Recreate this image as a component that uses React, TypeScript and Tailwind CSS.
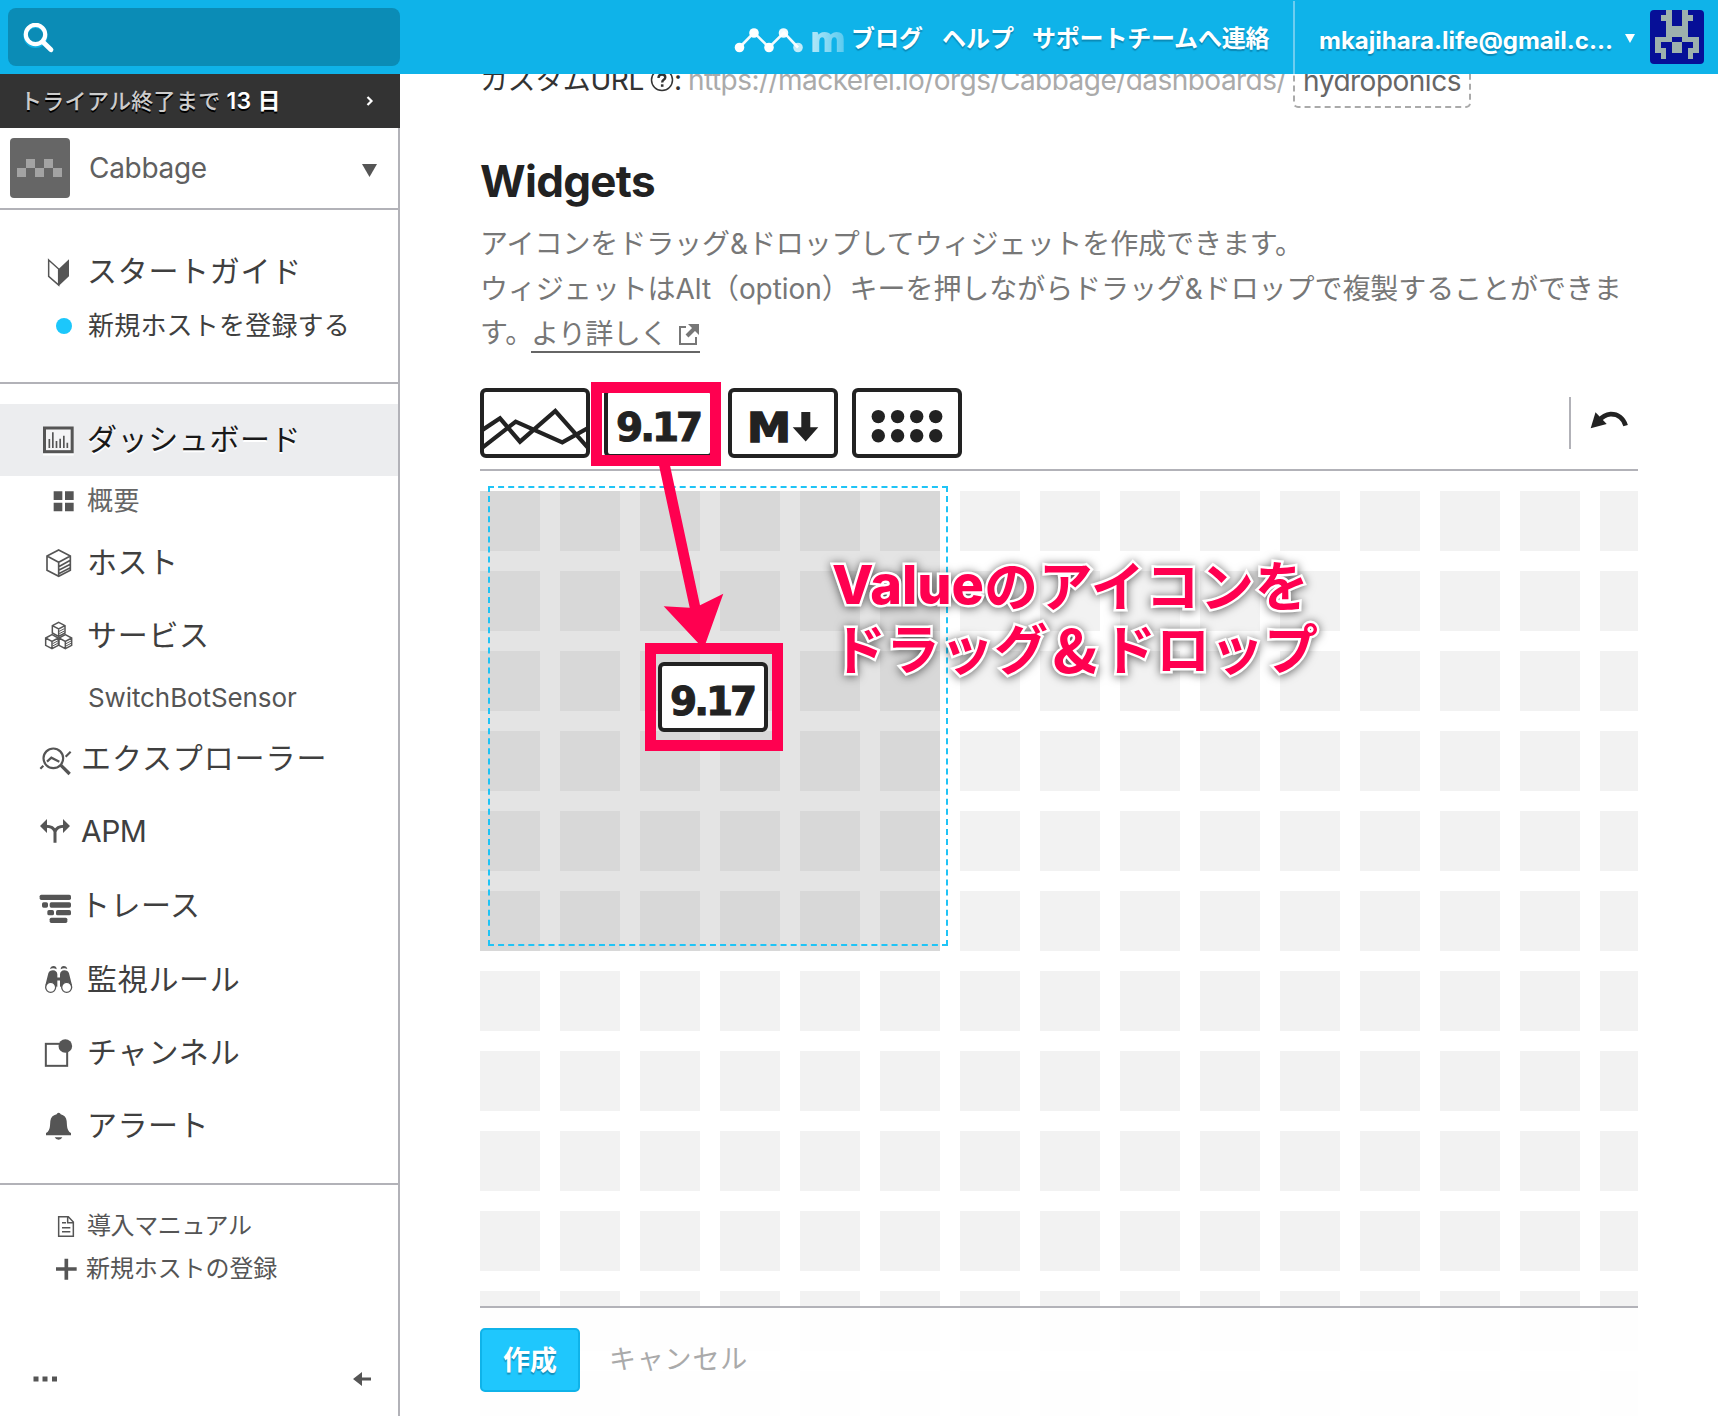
import type { ReactNode } from "react";

const INK = "#555555";

/* Sidebar glyphs share a 36px slot drawn on a 108-unit canvas. */
function NavIcon({ top, children }: { top: number; children: ReactNode }) {
  return (
    <svg className="ml-[39px] size-9 shrink-0" viewBox={`117 ${top} 108 108`} fill="none" stroke={INK}>
      {children}
    </svg>
  );
}

const icons = {
  guide: (
    <NavIcon top={759}>
      <path d="M146 780L176 807V855L146 829Z" strokeWidth="4.5" />
      <path d="M176 807L207 778V829L176 858Z" fill={INK} stroke="none" />
    </NavIcon>
  ),
  dashboard: (
    <NavIcon top={127}>
      <path d="M129 225H221" stroke="#ffffff" strokeWidth="5" />
      <rect x="133.500" y="145" width="83" height="71" fill="#f4f4f5" strokeWidth="9" />
      <path d="M148 205V178M158.500 205V158M169.500 205V184M180.500 205V177M191.500 205V168M202 205V189" strokeWidth="5" />
    </NavIcon>
  ),
  host: (
    <NavIcon top={492}>
      <path d="M176 510L211 528V571L176 589L141 571V528ZM141 528L176 547L211 528M176 547V589M176 560L211 541M176 571L211 553M176 581L211 563" strokeWidth="5" />
    </NavIcon>
  ),
  service: (
    <NavIcon top={711}>
      <g strokeWidth="4.500">
        <path d="M176 727L195 737V759L176 769L157 759V737ZM157 737L176 747L195 737M176 747V769" />
        <path d="M156 764L175 774V796L156 806L137 796V774ZM137 774L156 784L175 774M156 784V806" />
        <path d="M196 764L215 774V796L196 806L177 796V774ZM177 774L196 784L215 774M196 784V806" />
        <path
          d="M178 754L193 746M178 761L193 753M158 791L173 783M158 798L173 790M198 791L213 783M198 798L213 790"
          strokeWidth="3"
        />
      </g>
    </NavIcon>
  ),
  explorer: (
    <NavIcon top={60}>
      <circle cx="160" cy="115" r="29.500" strokeWidth="6.500" />
      <path d="M183 136L209 162" strokeWidth="10" />
      <path d="M141 125L154 113L178 125" strokeWidth="6.500" />
      <path d="M197 110L212 95M121 146L130 137" strokeWidth="6.500" />
    </NavIcon>
  ),
  apm: (
    <NavIcon top={279}>
      <path d="M120 318L141 297V339ZM210 318L189 297V339Z" fill={INK} stroke="none" />
      <path d="M138 319Q160 319 165 335Q171 319 192 319M165 329V368" strokeWidth="9" />
    </NavIcon>
  ),
  trace: (
    <NavIcon top={501}>
      <g fill={INK} stroke="none">
        <rect x="119" y="524" width="94" height="16" rx="5" />
        <rect x="126" y="547" width="18" height="16" rx="5" />
        <rect x="149" y="547" width="64" height="16" rx="5" />
        <rect x="142" y="570" width="20" height="16" rx="5" />
        <rect x="168" y="570" width="45" height="16" rx="5" />
        <rect x="149" y="593" width="53" height="16" rx="5" />
      </g>
    </NavIcon>
  ),
  monitor: (
    <NavIcon top={723}>
      <path d="M136 796L145 760Q148 751 159 751Q171 752 172 763V800ZM216 796L207 760Q204 751 193 751Q181 752 180 763V800Z" fill={INK} stroke="none" />
      <path d="M170 777H182" strokeWidth="9" />
      <path d="M150 747Q152 738 161 738Q169 738 170 748Q160 742 150 747ZM202 747Q200 738 191 738Q183 738 182 748Q192 742 202 747Z" fill={INK} stroke="none" />
      <circle cx="152" cy="802" r="15" fill="#fff" strokeWidth="4" />
      <circle cx="200" cy="802" r="15" fill="#fff" strokeWidth="4" />
    </NavIcon>
  ),
  channel: (
    <NavIcon top={942}>
      <rect x="137.500" y="971.500" width="64" height="66" strokeWidth="6" />
      <circle cx="196" cy="978" r="20.500" fill={INK} stroke="none" />
    </NavIcon>
  ),
  alert: (
    <NavIcon top={1161}>
      <path
        d="M138 1246V1239Q149 1233 150 1217L151 1203Q153 1187 170 1183Q171 1178 176 1178Q181 1178 182 1183Q198 1187 200 1203L201 1217Q202 1233 213 1239V1246ZM164 1252H187Q184 1259 176 1259Q167 1259 164 1252Z"
        fill={INK}
        stroke="none"
      />
    </NavIcon>
  ),
};

type Item = { label: string; row: string; icon?: ReactNode; text: string };

const MAIN = "pb-[1px] text-[30px] text-[#3f3f3f]";

const navItems: Item[] = [
  {
    label: "ダッシュボード",
    row: "h-[72px] bg-[#ecedef]",
    icon: icons.dashboard,
    text: "ml-[12px] pb-[3px] text-[30px] tracking-[0.6px] text-[#191919] [text-shadow:0_2px_0_#fff]",
  },
  {
    label: "概要",
    row: "h-[50px]",
    icon: (
      <svg className="ml-[53px] size-[22px] shrink-0" viewBox="0 0 66 66" fill={INK}>
        <path d="M2 4h26v26h-26zM36 4h26v26h-26zM2 38h26v26h-26zM36 38h26v26h-26z" />
      </svg>
    ),
    text: "ml-[12px] text-[26px] tracking-[0.4px] text-[#666]",
  },
  { label: "ホスト", row: "h-[72px]", icon: icons.host, text: `ml-[12px] tracking-[0.5px] ${MAIN}` },
  { label: "サービス", row: "h-[74px]", icon: icons.service, text: `ml-[12px] tracking-[0.7px] ${MAIN}` },
  { label: "SwitchBotSensor", row: "h-[50px]", text: "ml-[88px] pt-[2px] text-[26px] tracking-[-0.1px] text-[#555]" },
  { label: "エクスプローラー", row: "h-[72px]", icon: icons.explorer, text: `ml-[6px] tracking-[0.9px] ${MAIN}` },
  { label: "APM", row: "h-[74px]", icon: icons.apm, text: "ml-[6px] text-[30px] tracking-[-0.5px] text-[#3f3f3f]" },
  { label: "トレース", row: "h-[74px]", icon: icons.trace, text: `ml-[5px] tracking-[0.5px] ${MAIN}` },
  { label: "監視ルール", row: "h-[74px]", icon: icons.monitor, text: `ml-[12px] tracking-[0.7px] ${MAIN}` },
  { label: "チャンネル", row: "h-[72px]", icon: icons.channel, text: `ml-[12px] tracking-[0.9px] ${MAIN}` },
  { label: "アラート", row: "h-[74px]", icon: icons.alert, text: `ml-[12px] tracking-[0.5px] ${MAIN}` },
];

function NavRow({ item }: { item: Item }) {
  return (
    <div className={`flex items-center ${item.row}`}>
      {item.icon}
      <span className={`whitespace-nowrap leading-none ${item.text}`}>{item.label}</span>
    </div>
  );
}

function Sidebar() {
  return (
    <aside className="flex w-[400px] shrink-0 flex-col">
      <div className="flex h-[54px] items-center bg-[#333] pl-[20px] text-[22px] leading-none text-[#ccc] [text-shadow:0_2px_0_#000]">
        <span className="pb-[1px] font-medium tracking-[0.3px]">トライアル終了まで</span>
        <b className="ml-[6px] text-[23px] font-semibold tracking-[0.3px] text-white">13 日</b>
        <svg className="mr-[26px] ml-auto h-3 w-2" viewBox="0 0 8 12" fill="none" stroke="#fff" strokeWidth="2.200">
          <path d="M1.500 2L5.500 6L1.500 10" />
        </svg>
      </div>
      <div className="flex flex-1 flex-col border-r-2 border-[#b2b2b8]">
        <div className="flex h-[82px] items-center border-b-2 border-[#b2b2b8] pl-[10px]">
          <div className="flex size-[60px] items-center justify-center rounded bg-[#666]">
            <svg className="h-[18px] w-[46px]" viewBox="0 0 46 18" fill="#a3a3a3">
              <path d="M0 9h9v9H0zM9 0h9v9H9zM18 9h9v9h-9zM27 0h9v9h-9zM36 9h9v9h-9z" />
            </svg>
          </div>
          <span className="ml-[19px] text-[28px] leading-none tracking-[-0.3px] text-[#606060]">Cabbage</span>
          <svg className="mt-[4px] mr-[21px] ml-auto h-[13px] w-[15px]" viewBox="0 0 15 13" fill={INK}>
            <path d="M0 0h15L7.500 13z" />
          </svg>
        </div>
        <div className="h-[174px] border-b-2 border-[#b2b2b8] pt-[25px]">
          <NavRow item={{ label: "スタートガイド", row: "h-[72px]", icon: icons.guide, text: `ml-[12px] tracking-[0.7px] ${MAIN}` }} />
          <div className="flex h-[38px] items-center">
            <span className="ml-[56px] size-4 rounded-full bg-[#1cc7fb]" />
            <span className="ml-[16px] text-[26px] leading-none tracking-[0.2px] text-[#3f3f3f]">新規ホストを登録する</span>
          </div>
        </div>
        <nav className="h-[801px] border-b-2 border-[#b2b2b8] pt-[20px]">
          {navItems.map((item) => (
            <NavRow key={item.label} item={item} />
          ))}
        </nav>
        <div className="pt-[20px] text-[24px] leading-none text-[#555]">
          <div className="flex h-[42px] items-center">
            <svg className="ml-[54px] size-6" viewBox="162 162 72 72" fill="none" stroke={INK} strokeWidth="5">
              <path d="M176 170H205L220 186V229H176ZM203 170V188H220M186 188H198M186 203H211M186 215H211" strokeWidth="4.500" />
            </svg>
            <span className="ml-[9px] tracking-[-0.4px]">導入マニュアル</span>
          </div>
          <div className="flex h-[44px] items-center">
            <svg className="ml-[54px] size-6" viewBox="162 291 72 72" fill="none" stroke={INK} strokeWidth="11">
              <path d="M168 327H230M199 296V359" />
            </svg>
            <span className="ml-[8px] tracking-[-0.1px]">新規ホストの登録</span>
          </div>
        </div>
        <div className="mt-auto flex h-[74px] items-center justify-between pr-[27px] pl-[33px]">
          <svg className="h-6 w-6" viewBox="0 0 24 24" fill={INK}>
            <path d="M.5 9.500h5v5h-5zM9.500 9.500h5v5h-5zM19 9.500h5v5h-5z" />
          </svg>
          <svg className="h-[14px] w-[18px]" viewBox="0 0 18 14" fill={INK}>
            <path d="M0 7L9 0V5.500H18V8.500H9V14Z" />
          </svg>
        </div>
      </div>
    </aside>
  );
}

const avatarPixels =
  "M3 0h1v1h-1zM6 0h1v1h-1zM2 1h2v1h-2zM6 1h2v1h-2zM3 2h1v1h-1zM6 2h1v1h-1zM3 3h4v2h-4zM1 5h3v1h-3zM6 5h3v1h-3zM1 6h1v2h-1zM8 6h1v2h-1zM4 6h2v2h-2zM2 7h1v2h-1zM7 7h1v2h-1z";

function Header() {
  return (
    <header className="relative z-10 flex h-[74px] items-center bg-[#0fb3e9] font-bold text-white [text-shadow:0_2px_1px_rgba(0,60,90,0.35)]">
      <div className="ml-[8px] flex h-[58px] w-[392px] items-center rounded-lg bg-[#0b8cb6] pl-[15px]">
        <svg className="mt-[3px] size-8" viewBox="0 0 32 32" fill="none">
          <circle cx="12.500" cy="13" r="10" stroke="#10b1e5" strokeWidth="4" />
          <circle cx="12.500" cy="11.500" r="9.700" stroke="#fff" strokeWidth="4.200" />
          <path d="M20 19L28 26.800" stroke="#fff" strokeWidth="4.800" strokeLinecap="round" />
        </svg>
      </div>
      <svg className="mt-[2px] ml-[333px] h-8 w-[72px] shrink-0" viewBox="0 0 72 32">
        <g transform="translate(-699 -22)" fill="#fff">
          <path d="M705.500 47.500L720 32.500L735 47.500L750 32.500L764 47.500" fill="none" stroke="#fff" strokeWidth="2.600" strokeOpacity=".95" />
          <circle cx="705.500" cy="47.500" r="4.800" />
          <circle cx="720" cy="33" r="4.800" />
          <circle cx="735" cy="47.500" r="4.800" />
          <circle cx="749.500" cy="33" r="4.800" opacity=".95" />
          <circle cx="764" cy="47.500" r="4.800" opacity=".75" />
        </g>
      </svg>
      <span className="mt-[3px] ml-[5px] w-[36px] bg-linear-to-r from-white/70 to-white/30 bg-clip-text font-['Open_Sans','Noto_Sans',sans-serif] text-[36px] leading-[44px] font-extrabold text-transparent [text-shadow:none]">
        m
      </span>
      <nav className="flex items-center pt-[3px] text-[24px] leading-none whitespace-nowrap">
        <span className="ml-[5px]">ブログ</span>
        <span className="ml-[19px]">ヘルプ</span>
        <span className="ml-[18px] tracking-[-0.2px]">サポートチームへ連絡</span>
      </nav>
      <div className="mt-px ml-auto h-[73px] w-[2px] bg-[#6dcdf0]" />
      <span className="ml-[24px] w-[296px] pt-[7px] text-[24px] leading-none whitespace-nowrap">mkajihara.life@gmail.c...</span>
      <svg className="mt-[3px] ml-[10px] h-[9px] w-[10px]" viewBox="0 0 10 9" fill="#fff">
        <path d="M0 0h10L5 9z" />
      </svg>
      <svg className="mr-[14px] ml-[15px] size-[54px] rounded bg-[#060f97]" viewBox="0 0 10 10" fill="#9db1ad" shapeRendering="crispEdges">
        <path d={avatarPixels} />
      </svg>
    </header>
  );
}

function WidgetButton({ children }: { children: ReactNode }) {
  return (
    <div className="h-[70px] w-[110px] overflow-hidden rounded-[6px] border-4 border-[#222] bg-white">
      <svg className="-m-1 h-[70px] w-[110px] max-w-none" viewBox="0 0 110 70" fill="#222">
        {children}
      </svg>
    </div>
  );
}

function ValueButton() {
  return (
    <WidgetButton>
      <text x="12" y="53" className="font-['DejaVu_Sans',sans-serif] text-[39px] font-bold tracking-[-3px]" stroke="#222" strokeWidth="1">
        9.17
      </text>
    </WidgetButton>
  );
}

function Toolbar() {
  return (
    <div className="flex h-[83px] items-start border-b-2 border-[#b2b2b8]">
      <div className="flex gap-[14px]">
        <WidgetButton>
          <path
            d="M0 43.500L20 30.300L40 53.700L75.300 23L109 61M0 61.500L35.700 33.700L82.300 54.300L110 39"
            fill="none"
            stroke="#222"
            strokeWidth="4.200"
          />
        </WidgetButton>
        <ValueButton />
        <WidgetButton>
          <text x="19" y="54" textLength="44" lengthAdjust="spacingAndGlyphs" className="font-['DejaVu_Sans',sans-serif] text-[40px] font-bold" stroke="#222" strokeWidth="1.500">
            M
          </text>
          <path d="M73.300 24H82.300V39.300H90.300L77.700 53.500L64.700 39.300H73.300Z" />
        </WidgetButton>
        <WidgetButton>
          {[26.3, 45.6, 64.7, 83.7].map((x) => (
            <g key={x}>
              <circle cx={x} cy="28.600" r="6.700" />
              <circle cx={x} cy="47.700" r="6.700" />
            </g>
          ))}
        </WidgetButton>
      </div>
      <div className="mt-[9px] ml-auto h-[52px] w-[2px] bg-[#b2b2b8]" />
      <svg className="mt-[22px] mr-[9px] ml-[18px] h-6 w-10" viewBox="0 0 40 24">
        <path d="M6.500 2.300L1.700 18.300L17.700 14Z" fill="#222" />
        <path d="M9.500 11Q15 4.700 21.500 4.200C29 4 34.500 8.500 36.600 15.700" fill="none" stroke="#222" strokeWidth="4.700" />
      </svg>
    </div>
  );
}

function Main() {
  return (
    <main className="relative -mt-[22px] h-[1364px] flex-1 overflow-hidden pr-[80px] pl-[80px]">
      <div className="flex h-[56px] items-center text-[28px] leading-none whitespace-nowrap text-[#333]">
        <span className="w-[164px] pb-[1px] tracking-[-0.4px]">カスタムURL</span>
        <svg className="ml-[6px] size-6" viewBox="0 0 24 24" fill="none" stroke="#333" strokeWidth="1.500">
          <circle cx="12" cy="12" r="10.500" />
          <path d="M8.500 10Q8.500 6.500 12 6.500Q15.300 6.500 15.300 9.300Q15.300 10.700 13.700 11.800Q12.200 12.800 12.200 14.500" strokeWidth="2.400" />
          <path d="M12.200 16.300V18.800" strokeWidth="2.600" />
        </svg>
        <span className="w-[14px] pb-[1px]">:</span>
        <span className="w-[603px] pb-[1px] tracking-[-0.54px] text-[#aaa]">https://mackerel.io/orgs/Cabbage/dashboards/</span>
        <span className="ml-[2px] flex h-[56px] w-[178px] items-center justify-center rounded-[5px] border-2 border-dashed border-[#aaa] pt-[1px] tracking-[-0.5px] text-[#666]">
          hydroponics
        </span>
      </div>
      <h1 className="mt-[43px] flex h-[60px] items-center text-[44px] leading-none font-bold tracking-[-0.7px] text-[#222]">Widgets</h1>
      <p className="mt-[11px] h-[134px] text-[28px] leading-[44.500px] tracking-[-0.07px] whitespace-nowrap text-[#777]">
        アイコンをドラッグ&amp;ドロップしてウィジェットを作成できます。
        <br />
        <span>ウィジェットはAlt（option）キーを押しながらドラッグ&amp;ドロップで複製することができま</span>
        <br />
        <span className="mr-[-2px]">す。</span>
        <a className="inline-flex h-[35px] items-center border-b-2 border-[#666] align-middle leading-none">
          <span className="tracking-[-0.6px]">より詳しく</span>
          <svg className="ml-[10px] size-[22px]" viewBox="0 0 22 22" fill="none" stroke="#777" strokeWidth="2">
            <path d="M8 4H2V21H18V14" />
            <path d="M9 13L17 5" strokeWidth="4" />
            <path d="M10 1H21V12Z" fill="#777" stroke="none" />
          </svg>
        </a>
      </p>
      <div className="mt-[32px]">
        <Toolbar />
      </div>
      <div className="relative mt-[20px] h-[940px]">
        <div className="grid h-full grid-cols-[repeat(15,60px)] gap-5 overflow-hidden">
          {Array.from({ length: 180 }, (_, i) => (
            <div key={i} className="h-[60px] bg-[#f2f2f2]" />
          ))}
        </div>
        <div className="absolute top-0 left-0 size-[460px] bg-black/[0.104]" />
        <div className="absolute -top-[5px] left-[8px] size-[460px] border-2 border-dashed border-[#1fc4f6]" />
      </div>
      <footer className="absolute right-[80px] bottom-0 left-[80px] flex h-[110px] items-start border-t-2 border-[#b2b2b8] bg-white/90 pt-[20px]">
        <button className="flex h-[64px] w-[100px] items-center justify-center rounded-[5px] border-2 border-[#0fb3e9] bg-[#1fc7fd] text-[27px] leading-none font-bold text-white [text-shadow:0_2px_1px_rgba(0,60,90,0.4)]">
          作成
        </button>
        <button className="ml-[29px] h-[62px] text-[27px] leading-none tracking-[0.8px] text-[#aaa]">キャンセル</button>
      </footer>
    </main>
  );
}

/* Tutorial call-outs drawn over the page. */
function Annotations() {
  return (
    <div className="pointer-events-none absolute inset-0">
      <div className="absolute top-[382px] left-[591px] h-[84px] w-[130px] border-[11px] border-[#ff0050]" />
      <svg className="absolute top-[460px] left-[650px] h-[190px] w-[90px]" viewBox="650 460 90 190" fill="#ff0050">
        <path d="M658.700 464H669.700L700 605.300L723.300 593.700L705 645H700L663.700 606.300L689.700 607.700Z" />
      </svg>
      <div className="absolute top-[643px] left-[645px] h-[108px] w-[138px] border-[11px] border-[#ff0050]" />
      <div className="absolute top-[662px] left-[658px]">
        <ValueButton />
      </div>
      <div className="absolute top-[552px] left-[832px] font-['Noto_Sans_CJK_JP',sans-serif] text-[54px] leading-[63px] font-bold whitespace-nowrap text-[#ff0050] [-webkit-text-stroke:5px_#fff] [filter:drop-shadow(0_1px_5px_rgba(0,0,0,0.6))] [paint-order:stroke]">
        <div className="flex h-[63px] items-center">
          <span className="pt-[2px] font-['Inter',sans-serif] text-[54px] font-extrabold">Value</span>
          <span className="tracking-[0.7px]">のアイコンを</span>
        </div>
        <div className="flex h-[62px] items-center">
          ドラッグ
          <span className="w-[54px] text-center text-[60px]">&amp;</span>
          ドロップ
        </div>
      </div>
    </div>
  );
}

export default function App() {
  return (
    <div className="relative h-[1416px] w-[1718px] overflow-hidden bg-white font-['Inter','Noto_Sans_CJK_JP',sans-serif]">
      <Header />
      <div className="flex h-[1342px]">
        <Sidebar />
        <Main />
      </div>
      <Annotations />
    </div>
  );
}
